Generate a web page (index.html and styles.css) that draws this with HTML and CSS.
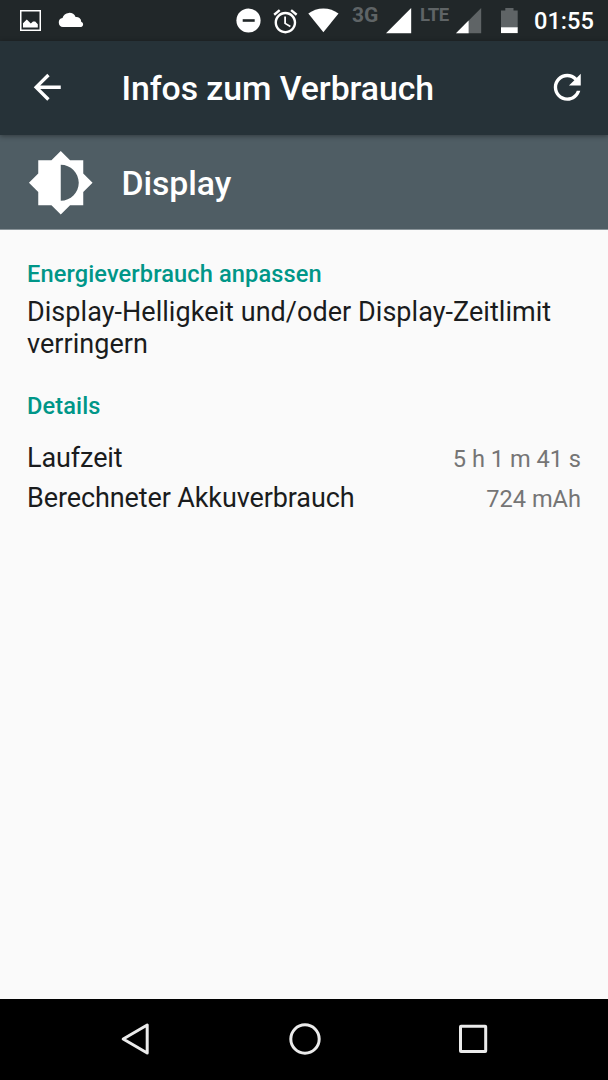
FILE: index.html
```
<!doctype html>
<html lang="de">
  <head>
    <meta charset="UTF-8" />
    <title>Infos zum Verbrauch</title>
    <link rel="stylesheet" href="styles.css">
  </head>
  <body>
    <div class="screen">
      <!-- status bar -->
      <div class="status-bar">
        <div class="status-notifications">
          <svg class="icon-image" width="21" height="21" viewBox="0 0 21 21">
            <rect x="0.75" y="0.75" width="19.5" height="19.5" fill="none" stroke="#fff" stroke-width="1.5" />
            <path d="M3 17.6v-4.4l3.8-3.6 4 4 2.2-2.2h2.2l2.6 2.8v3.4z" />
          </svg>
          <svg class="icon-cloud" width="27" height="16" viewBox="0 0 27 16">
            <path d="M5 15a4.6 4.6 0 0 1-.5-9.1A7 7 0 0 1 17.6 5a4.8 4.8 0 0 1 5.6 4.7A2.8 2.8 0 0 1 23.3 15z" />
          </svg>
        </div>
        <div class="status-system">
          <svg class="icon-dnd" width="25" height="25" viewBox="0 0 25 25">
            <circle cx="12.5" cy="12.5" r="12.1" />
            <rect x="6.7" y="11.2" width="12" height="2.6" fill="#212729" />
          </svg>
          <svg class="icon-alarm" width="28.8" height="28.8" viewBox="0 0 24 24">
            <path
              d="M22 5.72l-4.6-3.86-1.29 1.53 4.6 3.86L22 5.72zM7.88 3.39L6.6 1.86 2 5.71l1.29 1.53 4.59-3.85zM12.5 8H11v6l4.75 2.85.75-1.23-4-2.37V8zM12 4c-4.97 0-9 4.03-9 9s4.02 9 9 9c4.97 0 9-4.03 9-9s-4.03-9-9-9zm0 16c-3.87 0-7-3.13-7-7s3.13-7 7-7 7 3.13 7 7-3.13 7-7 7z"
            />
          </svg>
          <svg class="icon-wifi" width="31" height="25" viewBox="0 0 31 25">
            <path d="M15.4 24.3L.3 5.6C4.6 2.2 9.8.4 15.4.4s10.8 1.8 15.1 5.2z" />
          </svg>
          <span class="network network-3g">3G</span>
          <svg class="icon-signal" width="26" height="26" viewBox="0 0 26 26">
            <path d="M0 25.2L25.2 0v25.2z" />
          </svg>
          <span class="network network-lte">LTE</span>
          <svg class="icon-signal-low" width="26" height="26" viewBox="0 0 26 26">
            <path d="M0 25.2L25.2 0v25.2z" fill="#5f6466" />
            <path d="M0 25.2L12.6 12.6v12.6z" />
          </svg>
          <svg class="icon-battery" width="17" height="26" viewBox="0 0 17 26">
            <path d="M0 2.6h4.3V0h8.2v2.6h4.2V20H0z" fill="#5f6466" />
            <path d="M0 19.3h16.7v5.8H0z" />
          </svg>
          <span class="clock">01:55</span>
        </div>
      </div>

      <!-- toolbar -->
      <div class="toolbar">
        <svg class="toolbar-icon" viewBox="0 0 24 24">
          <path d="M20 11H7.83l5.59-5.59L12 4l-8 8 8 8 1.41-1.41L7.83 13H20v-2z" />
        </svg>
        <span class="toolbar-title">Infos zum Verbrauch</span>
        <svg class="toolbar-icon" viewBox="0 0 24 24">
          <path
            d="M17.65 6.35C16.2 4.9 14.21 4 12 4c-4.42 0-7.99 3.58-7.99 8s3.57 8 7.99 8c3.73 0 6.84-2.55 7.73-6h-2.08c-.82 2.33-3.04 4-5.65 4-3.31 0-6-2.69-6-6s2.69-6 6-6c1.66 0 3.14.69 4.22 1.78L13 11h7V4l-2.35 2.35z"
          />
        </svg>
      </div>

      <!-- app header -->
      <div class="app-header">
        <svg class="app-icon" viewBox="0 0 24 24">
          <path
            d="M20 15.31L23.31 12 20 8.69V4h-4.69L12 .69 8.69 4H4v4.69L.69 12 4 15.31V20h4.69L12 23.31 15.31 20H20v-4.69zM12 18.4V5.6c3.5 0 6.4 2.9 6.4 6.4s-2.9 6.4-6.4 6.4z"
          />
        </svg>
        <span class="app-name">Display</span>
      </div>

      <!-- content -->
      <div class="content">
        <h2 class="section-title">Energieverbrauch anpassen</h2>
        <p class="section-text">Display-Helligkeit und/oder Display-Zeitlimit verringern</p>

        <h2 class="section-title section-details">Details</h2>
        <div class="detail-row">
          <span class="detail-label">Laufzeit</span>
          <span class="detail-value">5 h 1 m 41 s</span>
        </div>
        <div class="detail-row">
          <span class="detail-label">Berechneter Akkuverbrauch</span>
          <span class="detail-value">724 mAh</span>
        </div>
      </div>

      <!-- navigation bar -->
      <div class="nav-bar">
        <svg width="32" height="34" viewBox="0 0 32 34">
          <path d="M3.2 17L27.2 3v28z" />
        </svg>
        <svg width="34" height="34" viewBox="0 0 34 34">
          <circle cx="17" cy="17" r="14.2" />
        </svg>
        <svg width="32" height="34" viewBox="0 0 32 34">
          <rect x="3.5" y="4.3" width="25.2" height="25.2" rx="0.5" />
        </svg>
      </div>
    </div>
  </body>
</html>
```
FILE: styles.css
```
body {
  margin: 0;
  font-family: Roboto, 'Noto Sans', sans-serif;
  background-color: #fafafa;
}

svg {
  display: block;
  flex-shrink: 0;
  fill: #fff;
}

.screen {
  width: 608px;
  height: 1080px;
  display: flex;
  flex-direction: column;
  overflow: hidden;
}

/* status bar */
.status-bar {
  box-sizing: border-box;
  height: 41px;
  padding: 8px 14px 0 20px;
  display: flex;
  justify-content: space-between;
  background-color: #212729;
}
.status-notifications,
.status-system {
  display: flex;
  align-items: flex-start;
}
.icon-image {
  margin-top: 2px;
}
.icon-cloud {
  margin: 4px 0 0 16.5px;
}
.icon-alarm {
  margin: -1.5px 0 0 9.5px;
}
.icon-wifi {
  margin-left: 8.5px;
}
.network {
  color: #5f6466;
  font-weight: 700;
}
.network-3g {
  width: 27px;
  margin: -3px 7px 0 13px;
  font-size: 21px;
  line-height: 20px;
}
.network-lte {
  width: 30px;
  margin: -3px 6px 0 8px;
  font-size: 18.5px;
  letter-spacing: -0.3px;
  line-height: 20px;
}
.icon-battery {
  margin-left: 19px;
}
.clock {
  width: 60px;
  margin-left: 16px;
  color: #fff;
  font-size: 23.6px;
  font-weight: 500;
  line-height: 26px;
}

/* toolbar */
.toolbar {
  position: relative;
  box-sizing: border-box;
  height: 94px;
  padding: 0 21px 1px 27px;
  display: flex;
  align-items: center;
  background-color: #263238;
  box-shadow: 0 1px 5px rgba(0, 0, 0, 0.4);
}
.toolbar-icon {
  width: 40.5px;
  height: 40.5px;
}
.toolbar-title {
  flex: 1;
  margin: 2px 0 0 54px;
}
.toolbar-title,
.app-name {
  color: #fff;
  font-size: 33.8px;
  font-weight: 500;
  letter-spacing: -0.07px;
}

/* app header */
.app-header {
  box-sizing: border-box;
  height: 95px;
  padding-left: 27px;
  display: flex;
  align-items: center;
  gap: 27px;
  background-color: #4f5d64;
  border-bottom: 1px solid #8a9499;
}
.app-icon {
  width: 67.5px;
  height: 67.5px;
  margin-top: 1px;
}
.app-name {
  margin-top: 3px;
}

/* content */
.content {
  flex: 1;
  padding: 27px 27px 0;
  color: #1a1c1d;
  font-size: 27px;
}
.section-title {
  margin: 0;
  color: #009688;
  font-size: 23.6px;
  font-weight: 500;
  letter-spacing: 0.12px;
  line-height: 34px;
}
.section-text {
  margin: 5px 0 0;
  letter-spacing: 0.04px;
  line-height: 32px;
}
.section-details {
  margin: 29px 0 15px;
}
.detail-row {
  display: flex;
  justify-content: space-between;
  align-items: baseline;
  line-height: 40px;
}
.detail-row + .detail-row {
  margin-top: -1px;
}
.detail-label {
  letter-spacing: -0.11px;
}
.detail-value {
  color: #757575;
  font-size: 23.6px;
}

/* navigation bar */
.nav-bar {
  box-sizing: border-box;
  height: 81px;
  padding: 0 119px 1px 120px;
  display: flex;
  justify-content: space-between;
  align-items: center;
  background-color: #000;
}
.nav-bar svg {
  fill: none;
  stroke: #ebebeb;
  stroke-width: 3;
  stroke-linejoin: round;
}
```
